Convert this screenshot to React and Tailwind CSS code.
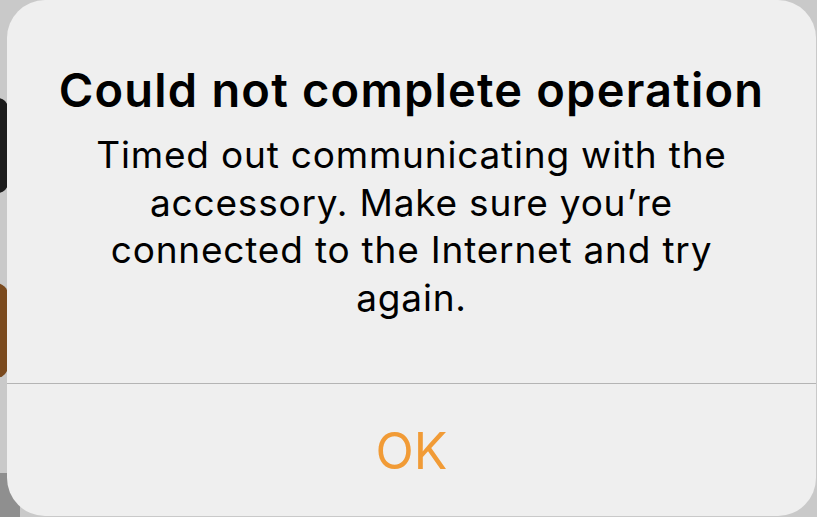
export default function App() {
  const font = { fontFamily: 'Inter, "Noto Sans", sans-serif' };
  return (
    <div className="relative w-[817px] h-[517px] overflow-hidden bg-[#c9c9c9]" style={font}>
      {/* background hints peeking at the left edge */}
      <div className="absolute left-[-20px] top-[98px] w-[28px] h-[95px] rounded-[10px] bg-[#1c1c1c]" />
      <div className="absolute left-[-20px] top-[283px] w-[28px] h-[95px] rounded-[12px] bg-[#7a4a1e]" />
      <div className="absolute left-[-10px] top-[473px] w-[30px] h-[60px] rounded-t-[8px] bg-[#8f8f8f]" />
      <div className="relative ml-[7px] mr-[1px] h-[516px] rounded-[38px] bg-[#efefef] flex flex-col">
        <div className="h-[384px] flex flex-col items-center pt-[62px] border-b border-[#b4b4b4]">
          <div className="text-[47px] leading-[56px] font-semibold text-black tracking-[1.2px] whitespace-nowrap">
            Could not complete operation
          </div>
          <div className="mt-[13px] w-[664px] text-center text-[37px] leading-[47.5px] text-black tracking-[0.8px]">
            Timed out communicating with the accessory. Make sure you’re connected to the Internet and try again.
          </div>
        </div>
        <div className="flex-1 flex items-center justify-center">
          <span className="text-[50px] leading-none text-[#f19b36] mt-[2px]">OK</span>
        </div>
      </div>
    </div>
  );
}
